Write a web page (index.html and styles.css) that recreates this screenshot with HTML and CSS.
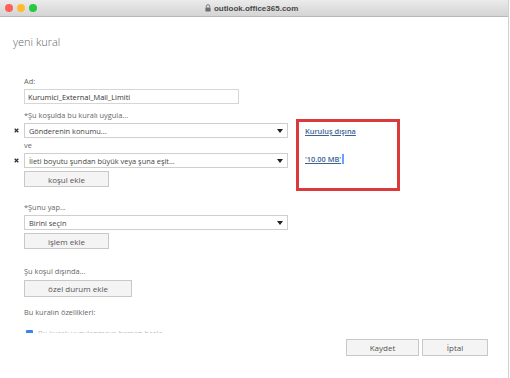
FILE: index.html
```html
<!DOCTYPE html>
<html lang="tr">
<head>
    <meta charset="UTF-8">
    <title>yeni kural</title>
    <link rel="stylesheet" href="styles.css">
</head>
<body>
    <div class="window">
        <div class="titlebar">
            <div class="lights">
                <span class="light red"></span>
                <span class="light yellow"></span>
                <span class="light green"></span>
            </div>
            <div class="url">
                <svg class="lock" width="6" height="8" viewBox="0 0 6 8">
                    <path d="M1.3 3.5V2.4a1.7 1.7 0 0 1 3.4 0v1.1" fill="none" stroke="#6e6e6e" stroke-width="0.9"/>
                    <rect x="0.4" y="3.4" width="5.2" height="4.2" rx="0.6" fill="#6e6e6e"/>
                </svg>
                outlook.office365.com
            </div>
        </div>

        <h1 class="page-title">yeni kural</h1>

        <div class="form-scroll">
            <div class="field">
                <label class="label">Ad:</label>
                <input class="text-input" type="text" value="Kurumici_External_Mail_Limiti">
            </div>

            <div class="conditions">
                <div class="cond-list">
                    <div class="label">*Şu koşulda bu kuralı uygula...</div>
                    <div class="cond-row">
                        <svg class="remove" width="5" height="5" viewBox="0 0 5 5"><path d="M0.7 0.7L4.3 4.3M4.3 0.7L0.7 4.3" stroke="#333" stroke-width="1.3"/></svg>
                        <div class="select">Gönderenin konumu...<span class="arrow"></span></div>
                    </div>
                    <div class="label">ve</div>
                    <div class="cond-row">
                        <svg class="remove" width="5" height="5" viewBox="0 0 5 5"><path d="M0.7 0.7L4.3 4.3M4.3 0.7L0.7 4.3" stroke="#333" stroke-width="1.3"/></svg>
                        <div class="select">İleti boyutu şundan büyük veya şuna eşit...<span class="arrow"></span></div>
                    </div>
                    <button class="btn btn-add">koşul ekle</button>
                </div>
                <div class="cond-values">
                    <a class="value-link" href="#">Kuruluş dışına</a>
                    <div><a class="value-link" href="#">'10.00 MB'</a><span class="caret"></span></div>
                </div>
            </div>

            <div class="section section-action">
                <div class="label">*Şunu yap...</div>
                <div class="select select-wide">Birini seçin<span class="arrow"></span></div>
                <button class="btn btn-add">işlem ekle</button>
            </div>

            <div class="section section-except">
                <div class="label">Şu koşul dışında...</div>
                <button class="btn btn-exception">özel durum ekle</button>
            </div>

            <div class="section section-props">
                <div class="label">Bu kuralın özellikleri:</div>
                <div class="check-row">
                    <span class="checkbox"></span>
                    <span class="check-text">Bu kuralı uygulanmaya hemen başla</span>
                </div>
            </div>
        </div>

        <div class="footer">
            <button class="btn btn-footer">Kaydet</button>
            <button class="btn btn-footer btn-cancel">İptal</button>
        </div>
    </div>
</body>
</html>
```

FILE: styles.css
```css
/* Outlook new rule dialog */
* {
    margin: 0;
    padding: 0;
    box-sizing: border-box;
}

body {
    font-family: 'Open Sans', 'Noto Sans', sans-serif;
    background-color: #ffffff;
    color: #444;
    width: 510px;
    height: 378px;
    overflow: hidden;
}

.window {
    width: 509px;
    height: 378px;
    border-right: 1px solid #d0d0d0;
}

.titlebar {
    height: 17px;
    background: linear-gradient(#ebebeb, #d4d4d4);
    border-bottom: 1px solid #b8b8b8;
    display: flex;
    align-items: center;
}

.lights {
    display: flex;
    gap: 4px;
    padding-left: 5px;
}

.light {
    width: 8px;
    height: 8px;
    border-radius: 50%;
}

.red { background-color: #fe5f57; }
.yellow { background-color: #febc2e; }
.green { background-color: #28c840; }

.url {
    flex: 1;
    text-align: center;
    font-family: 'Liberation Sans', sans-serif;
    font-size: 8px;
    font-weight: bold;
    color: #4a4a4a;
    margin-right: 42px;
}

.lock {
    vertical-align: -1px;
    margin-right: 1px;
}

.page-title {
    font-size: 11px;
    font-weight: 300;
    color: #666;
    padding: 17px 0 0 13px;
    height: 59px;
}

.form-scroll {
    height: 257px;
    overflow: hidden;
    padding-left: 24px;
}

.label {
    font-size: 7.4px;
    color: #666;
    line-height: 11px;
    display: block;
}

.field .label {
    margin-bottom: 2px;
}

.text-input {
    display: block;
    width: 215px;
    height: 15px;
    border: 1px solid #d6d6d6;
    padding: 0 3px;
    font-family: inherit;
    font-size: 7.4px;
    color: #333;
    outline: none;
}

.conditions {
    display: flex;
    gap: 8px;
    margin-top: 6px;
}

.cond-list {
    width: 264px;
}

.cond-list .label {
    margin-bottom: 2px;
}

.cond-row {
    display: flex;
    align-items: center;
    margin-left: -10px;
    margin-bottom: 2px;
}

.remove {
    margin-right: 5px;
    flex: none;
}

.select {
    flex: 1;
    height: 15px;
    border: 1px solid #cfcfcf;
    font-size: 7.4px;
    color: #444;
    padding-left: 4px;
    display: flex;
    align-items: center;
    position: relative;
}

.select-wide {
    width: 264px;
    flex: none;
    margin-top: 2px;
}

.arrow {
    position: absolute;
    right: 4px;
    top: 5px;
    border-left: 3px solid transparent;
    border-right: 3px solid transparent;
    border-top: 4px solid #222;
}

.btn {
    display: block;
    font-family: inherit;
    font-size: 8px;
    color: #555;
    background-color: #f4f4f4;
    border: 1px solid #c8c8c8;
    height: 16px;
}

.btn-add {
    width: 85px;
    margin-top: 3px;
}

.cond-values {
    width: 104px;
    height: 72px;
    border: 3px solid #dc3a3a;
    padding: 4px 0 0 6px;
    display: flex;
    flex-direction: column;
    gap: 9px;
    margin-top: 9px;
}

.value-link {
    font-size: 7.4px;
    font-weight: 600;
    color: #3d6393;
}

.caret {
    display: inline-block;
    width: 2px;
    height: 10px;
    background-color: #6aa1ff;
    margin-left: 1px;
    vertical-align: -2px;
}

.section-action {
    margin-top: 11px;
}

.section-except {
    margin-top: 17px;
}

.section-props {
    margin-top: 10px;
}

.btn-exception {
    width: 108px;
    height: 17px;
    margin-top: 3px;
}

.check-row {
    display: flex;
    align-items: center;
    gap: 5px;
    margin-top: 10px;
    margin-left: 2px;
}

.checkbox {
    width: 7px;
    height: 7px;
    border-radius: 1px;
    background-color: #3b82f6;
}

.check-text {
    font-size: 7.4px;
    color: #bbb;
}

.footer {
    display: flex;
    justify-content: flex-end;
    gap: 3px;
    padding-right: 20px;
    padding-top: 6px;
}

.btn-footer {
    width: 73px;
    height: 17px;
}

.btn-cancel {
    width: 66px;
}
```
